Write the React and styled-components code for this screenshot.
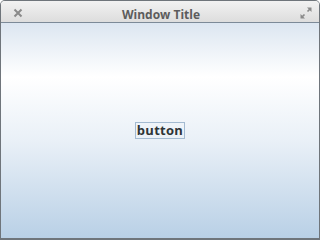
import React from 'react';
import styled, { createGlobalStyle } from 'styled-components';

const GlobalStyle = createGlobalStyle`
  html, body {
    margin: 0;
    padding: 0;
    width: 320px;
    height: 240px;
    overflow: hidden;
    background: #ffffff;
  }
  #root {
    width: 320px;
    height: 240px;
  }
`;

const Window = styled.div`
  box-sizing: border-box;
  width: 320px;
  height: 240px;
  display: flex;
  flex-direction: column;
  border: 1px solid #6f757b;
  border-bottom-width: 2px;
  border-radius: 5px 5px 0 0;
  overflow: hidden;
  font-family: "Open Sans", "DejaVu Sans", sans-serif;
`;

const TitleBar = styled.div`
  box-sizing: border-box;
  height: 22px;
  flex: none;
  display: flex;
  align-items: center;
  justify-content: space-between;
  padding: 6px 6px 0 10px;
  background: linear-gradient(to bottom, #f2f2f2, #dddddd);
  border-bottom: 1px solid #7c8a98;
`;

const Title = styled.div`
  font-size: 12px;
  font-weight: bold;
  color: #5c5c5c;
  line-height: 16px;
  margin-left: -2px;
`;

const IconButton = styled.div`
  width: 13px;
  height: 13px;
  display: flex;
  align-items: center;
  justify-content: center;
  margin-top: -3px;
`;

const Content = styled.div`
  flex: 1;
  display: flex;
  align-items: center;
  justify-content: center;
  background: linear-gradient(to bottom, #dce6f1 0%, #ffffff 25%, #e9f0f7 55%, #b9d0e6 100%);
`;

const Button = styled.button`
  font-family: "Open Sans", "DejaVu Sans", sans-serif;
  font-size: 13px;
  font-weight: bold;
  color: #2e3436;
  background: transparent;
  border: 1px solid #a3bad1;
  border-radius: 0;
  padding: 0 1px;
  height: 17px;
  line-height: 15px;
  letter-spacing: 0.3px;
  margin-top: 0;
`;

function CloseIcon() {
  return (
    <svg width="10" height="10" viewBox="0 0 10 10">
      <path d="M1.5 1.5 L8.5 8.5 M8.5 1.5 L1.5 8.5" stroke="#8a8a8a" strokeWidth="2" />
    </svg>
  );
}

function MaxIcon() {
  return (
    <svg width="12" height="12" viewBox="0 0 12 12">
      <path d="M7 0.5 H11.5 V5 Z" fill="#8a8a8a" />
      <path d="M0.5 7 V11.5 H5 Z" fill="#8a8a8a" />
      <path d="M10.5 1.5 L7.5 4.5 M1.5 10.5 L4.5 7.5" stroke="#8a8a8a" strokeWidth="1.6" />
    </svg>
  );
}

export default function App() {
  return (
    <>
      <GlobalStyle />
      <Window>
        <TitleBar>
          <IconButton><CloseIcon /></IconButton>
          <Title>Window Title</Title>
          <IconButton><MaxIcon /></IconButton>
        </TitleBar>
        <Content>
          <Button>button</Button>
        </Content>
      </Window>
    </>
  );
}
